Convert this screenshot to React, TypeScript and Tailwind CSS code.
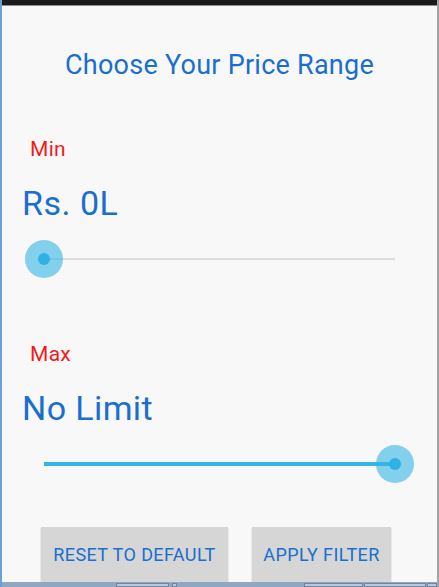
import React from 'react'

const font = { fontFamily: 'Roboto, "Liberation Sans", sans-serif' }

function Slider({ value }: { value: 'min' | 'max' }) {
  const atMax = value === 'max'
  return (
    <div className="relative h-[40px] w-[389px] ml-[23px]">
      {/* track */}
      {atMax ? (
        <div className="absolute left-[19px] right-[19px] top-[18px] h-[4px] bg-[#33b5e5]" />
      ) : (
        <div className="absolute left-[19px] right-[19px] top-[19px] h-[2px] bg-[#dcdcdc]" />
      )}
      {/* thumb */}
      <div
        className={
          atMax
            ? 'absolute right-0 top-[1px] w-[38px] h-[38px] rounded-full bg-[#33b5e5]/60 flex items-center justify-center'
            : 'absolute left-0 top-[1px] w-[38px] h-[38px] rounded-full bg-[#33b5e5]/60 flex items-center justify-center'
        }
      >
        <div className="w-[12px] h-[12px] rounded-full bg-[#2fb1e3]" />
      </div>
    </div>
  )
}

export default function App() {
  return (
    <div
      className="w-[439px] h-[587px] flex flex-col bg-[#f8f8f8] border-l-2 border-l-[#6c9fd6] border-r-2 border-r-[#a3a3a3] overflow-hidden"
      style={font}
    >
      <div className="h-[6px] bg-[#1b1b1b] border-b border-[#8f8f8f] shrink-0" />

      <h1 className="mt-[43px] text-center text-[27px] leading-[32px] tracking-[0.25px] text-[#196ecf]">
        Choose Your Price Range
      </h1>

      <p className="mt-[56px] pl-[28px] text-[21px] leading-[24px] tracking-[0.3px] text-[#f51a1a]">Min</p>
      <p className="mt-[22px] pl-[20px] text-[34px] leading-[40px] tracking-[0.5px] text-[#196ecf]">Rs. 0L</p>
      <div className="mt-[16px]">
        <Slider value="min" />
      </div>

      <p className="mt-[63px] pl-[28px] text-[21px] leading-[24px] tracking-[0.3px] text-[#f51a1a]">Max</p>
      <p className="mt-[22px] pl-[20px] text-[34px] leading-[40px] tracking-[0.4px] text-[#196ecf]">No Limit</p>
      <div className="mt-[16px]">
        <Slider value="max" />
      </div>

      <div className="mt-[43px] flex gap-[24px] pl-[39px]">
        <button className="w-[187px] h-[55px] bg-[#d6d6d6] text-[#196ecf] text-[18px] tracking-[0.4px] shadow-[0_1px_1px_rgba(0,0,0,0.35)]">
          RESET TO DEFAULT
        </button>
        <button className="w-[139px] h-[55px] bg-[#d6d6d6] text-[#196ecf] text-[18px] tracking-[0.4px] shadow-[0_1px_1px_rgba(0,0,0,0.35)]">
          APPLY FILTER
        </button>
      </div>

      <div className="flex-1 min-h-[5px] bg-[#8ea8c3] flex items-stretch pt-[1px]">
        <div className="ml-[114px] w-[53px] bg-[#b8c9db] border border-[#6f86a0]" />
        <div className="ml-[3px] w-[5px] bg-[#b8c9db] border border-[#6f86a0]" />
        <div className="ml-[127px] w-[60px] bg-[#b8c9db] border border-[#6f86a0]" />
        <div className="ml-[1px] w-[62px] bg-[#b8c9db] border border-[#6f86a0]" />
        <div className="ml-[1px] w-[10px] bg-[#b8c9db] border border-[#6f86a0]" />
      </div>
    </div>
  )
}
